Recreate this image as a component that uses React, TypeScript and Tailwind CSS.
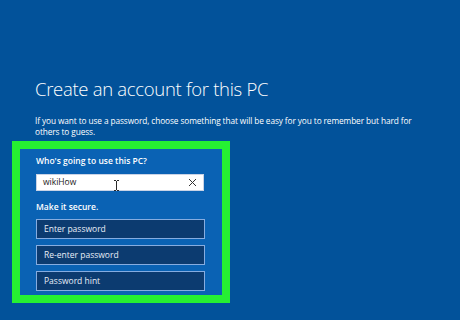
export default function App() {
  const fields = ["Enter password", "Re-enter password", "Password hint"];
  return (
    <div
      className="w-[460px] h-[320px] overflow-hidden bg-[#02529a] text-white"
      style={{ fontFamily: '"Open Sans", "Noto Sans", sans-serif' }}
    >
      <div className="pl-[35px] pt-[78px]">
        <h1 className="text-[18.5px] leading-[22px] font-light tracking-[-0.3px]">
          Create an account for this PC
        </h1>
        <p className="mt-[15px] w-[420px] text-[8.3px] leading-[11px] tracking-[-0.1px]">
          If you want to use a password, choose something that will be easy for you to remember but hard for
          <br />
          others to guess.
        </p>
      </div>

      <div className="ml-[12px] mt-[4px] w-[218px] h-[162px] border-[8px] border-[#26f032] bg-[#0a62b4]">
        <div className="pl-[16px] pt-[6px] w-[186px]">
          <div className="text-[8.5px] leading-[12px] font-semibold">Who's going to use this PC?</div>
          <div className="relative mt-[7px] h-[17px] w-[168px] bg-white border border-[#c9d3e6] flex items-center justify-between pl-[6px] pr-[6px] text-[#1a1a1a]">
            <span className="text-[8.5px]">wikiHow</span>
            <svg width="9" height="9" viewBox="0 0 9 9" className="text-[#333]">
              <path d="M1 1 L8 8 M8 1 L1 8" stroke="currentColor" strokeWidth="1" />
            </svg>
            {/* mouse I-beam cursor */}
            <svg width="5" height="11" viewBox="0 0 5 11" className="absolute left-[77px] top-[5px] text-[#2a2a2a]">
              <path d="M0 0.5 H2 M3 0.5 H5 M2.5 1 V10 M0 10.5 H2 M3 10.5 H5" stroke="currentColor" strokeWidth="1" fill="none" />
            </svg>
          </div>
          <div className="mt-[10px] text-[8.5px] leading-[12px] font-semibold">Make it secure.</div>
          <div className="mt-[6px] flex flex-col gap-[6px]">
            {fields.map((f) => (
              <div
                key={f}
                className="h-[20px] w-[169px] border border-[#86ace0] bg-[#0c3b70] flex items-center pl-[7px] text-[8.5px] text-[#e8eef8]"
              >
                {f}
              </div>
            ))}
          </div>
        </div>
      </div>
    </div>
  );
}
